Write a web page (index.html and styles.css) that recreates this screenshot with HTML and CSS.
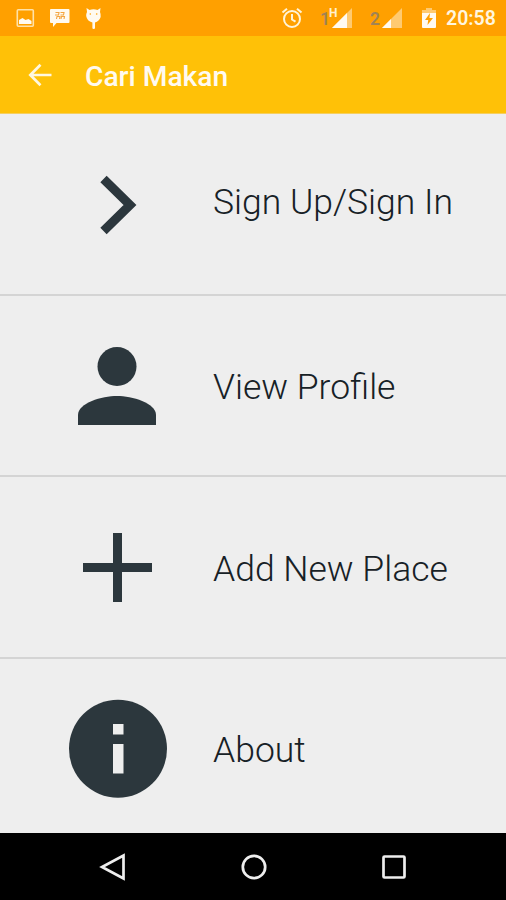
FILE: index.html
```
<!DOCTYPE html>
<html lang="en">
<head>
<meta charset="utf-8">
<title>Cari Makan</title>
<link rel="stylesheet" href="styles.css">
</head>
<body>
<div class="screen">
  <header class="status">
    <svg class="notifications" width="110" height="36" viewBox="0 0 110 36">
      <rect x="17.300" y="9.800" width="16" height="16.400" rx="1" fill="none" stroke="#ffe2a8" stroke-width="1.600"/>
      <path d="M19 24v-4l3.500-2 3 2 3-1 3 2v3z" fill="#fffaf0"/>
      <path d="M51 9h17.500q1 0 1 1v12q0 1-1 1h-12l-3.500 4v-4h-2q-1 0-1-1V10q0-1 1-1z" fill="#fffaf0"/>
      <path d="M55.500 12.500h3.500l-.5 2.500h-3.500M60.500 12.500h3.500l-.5 2.500h-3M56.500 19l.5-2.500h3l-.5 2.500M61 19l.5-2.500h3l-.5 2.500" fill="none" stroke="#f4a540" stroke-width="1.100"/>
      <path d="M86.500 8l3 2q4-1.300 8 0l3-2-.5 4q2 5-1.500 8.500-1.500 1.500-3.500 2V28q0 1-1.300 1T92.400 28v-5.500Q87 21 86.200 16q-.2-2 .8-4z" fill="#fffaf0"/>
      <circle cx="90.300" cy="14" r=".8" fill="#ffa000"/><circle cx="96.700" cy="14" r=".8" fill="#ffa000"/>
    </svg>
    <div class="system">
      <svg class="alarm" width="22" height="22" viewBox="0 0 22 22" fill="none" stroke="#fff4d8" stroke-width="2">
        <circle cx="11" cy="12" r="8"/><path d="M1.500 5.500L6 1.700M20.500 5.500L16 1.700M11 7v5.500l3.500 2.200"/>
      </svg>
      <span class="sim sim-one">1</span><span class="network">H</span>
      <svg class="signal signal-one" width="20" height="20" viewBox="0 0 20 20"><path d="M0 20L20 0v20z" fill="#ffca70"/><path d="M0 20L15 5v15z" fill="#fffaf0"/></svg>
      <span class="sim sim-two">2</span>
      <svg class="signal signal-two" width="20" height="20" viewBox="0 0 20 20"><path d="M0 20L20 0v20z" fill="#ffca70"/><path d="M0 20L9 11v9z" fill="#fffaf0"/></svg>
      <svg class="battery" width="14" height="20" viewBox="0 0 14 20"><path d="M4 0h6v2h4v6H0V2h4z" fill="#ffca70"/><path d="M0 5h14v14q0 1-1 1H1q-1 0-1-1z" fill="#fffaf0"/><path d="M8 5L3 12h3.200l-.7 5L11 10H7.500z" fill="#ffa000"/></svg>
      <span class="clock">20:58</span>
    </div>
  </header>
  <div class="appbar">
    <svg class="back" width="24" height="24" viewBox="0 0 24 24" fill="none" stroke="#fff8df" stroke-width="2.700"><path d="M23.500 12H2.500M12.500 1.800L2.300 12l10.200 10.200"/></svg>
    <h1 class="title">Cari Makan</h1>
  </div>
  <main class="menu">
    <div class="item">
      <svg class="icon" width="213" height="180" viewBox="0 114 213 180"><path d="M103.500 179l26.500 26-26.500 26" fill="none" stroke="#2c373d" stroke-width="9"/></svg>
      <span class="label signin">Sign Up/Sign In</span>
    </div>
    <div class="item">
      <svg class="icon" width="213" height="180" viewBox="0 296 213 180"><circle cx="117" cy="366.500" r="19.500"/><path d="M78 425v-10c0-12 24-19 39-19s39 7 39 19v10z"/></svg>
      <span class="label profile">View Profile</span>
    </div>
    <div class="item">
      <svg class="icon" width="213" height="180" viewBox="0 477 213 180"><path d="M113 533h9v30h30v9h-30v30h-9v-30H83v-9h30z"/></svg>
      <span class="label place">Add New Place</span>
    </div>
    <div class="item">
      <svg class="icon" width="213" height="174" viewBox="0 659 213 174"><circle cx="118" cy="748.700" r="49"/><path d="M113 724h10.500v10.500H113zM113 744h10.500v29.500H113z" fill="#eee"/></svg>
      <span class="label about">About</span>
    </div>
  </main>
  <nav class="navbar">
    <svg width="28" height="28" viewBox="0 0 28 28"><path d="M24.500 2.500v23L3 14z"/></svg>
    <svg width="28" height="28" viewBox="0 0 28 28"><circle cx="14" cy="14" r="11.200"/></svg>
    <svg width="28" height="28" viewBox="0 0 28 28"><rect x="3.500" y="3.500" width="21" height="21" rx="1"/></svg>
  </nav>
</div>
</body>
</html>
```
FILE: styles.css
```
* { box-sizing: border-box; }
body { margin: 0; font-family: Roboto, "Liberation Sans", sans-serif; }
svg { display: block; flex: none; }
.screen { width: 506px; height: 900px; display: flex; flex-direction: column; background: #eee; overflow: hidden; }
.status { height: 36px; flex: none; display: flex; justify-content: space-between; background: #ffa000; }
.system { display: flex; align-items: flex-start; width: 225px; line-height: 20px; }
.alarm { margin-top: 7px; }
.sim { font-size: 17.5px; font-weight: 600; color: #a08355; width: 10px; margin-top: 9px; }
.sim-one { margin-left: 17px; }
.network { font-size: 12px; font-weight: 700; line-height: 12px; width: 8px; color: #fff0d0; margin: 7px 0 0 -1px; }
.signal { margin-top: 8px; }
.signal-one { margin-left: -5px; }
.sim-two { margin-left: 18px; }
.signal-two { margin-left: 2px; }
.battery { margin: 8px 0 0 20px; }
.clock { margin: 9px 0 0 10px; font-size: 19.5px; font-weight: 600; color: #fff6df; white-space: nowrap; }
.appbar { height: 78px; flex: none; display: flex; align-items: center; padding-left: 28px; background: #ffc107; border-bottom: 1px solid #f5cf60; }
.title { margin: 4px 0 0 33px; font-size: 28.2px; line-height: 34px; font-weight: 500; color: #fffaf0; white-space: nowrap; }
.menu { flex: none; height: 719px; display: grid; grid-template-rows: 182px 181px 182px 174px; }
.item { display: flex; align-items: center; border-bottom: 2px solid #d4d4d4; }
.item:last-child { border-bottom: 0; }
.icon { fill: #2c373d; }
.label { font-size: 35.5px; line-height: 42px; font-weight: 300; color: #172126; white-space: nowrap; }
.signin { margin-bottom: 5px; }
.profile { margin-top: 3px; }
.place { margin-top: 4px; }
.about { margin-top: 8px; }
.navbar { flex: 1; display: flex; justify-content: space-between; align-items: center; padding: 0 98px 0 99px; background: #000; }
.navbar svg { fill: none; stroke: #eee; stroke-width: 2.700; }
```
